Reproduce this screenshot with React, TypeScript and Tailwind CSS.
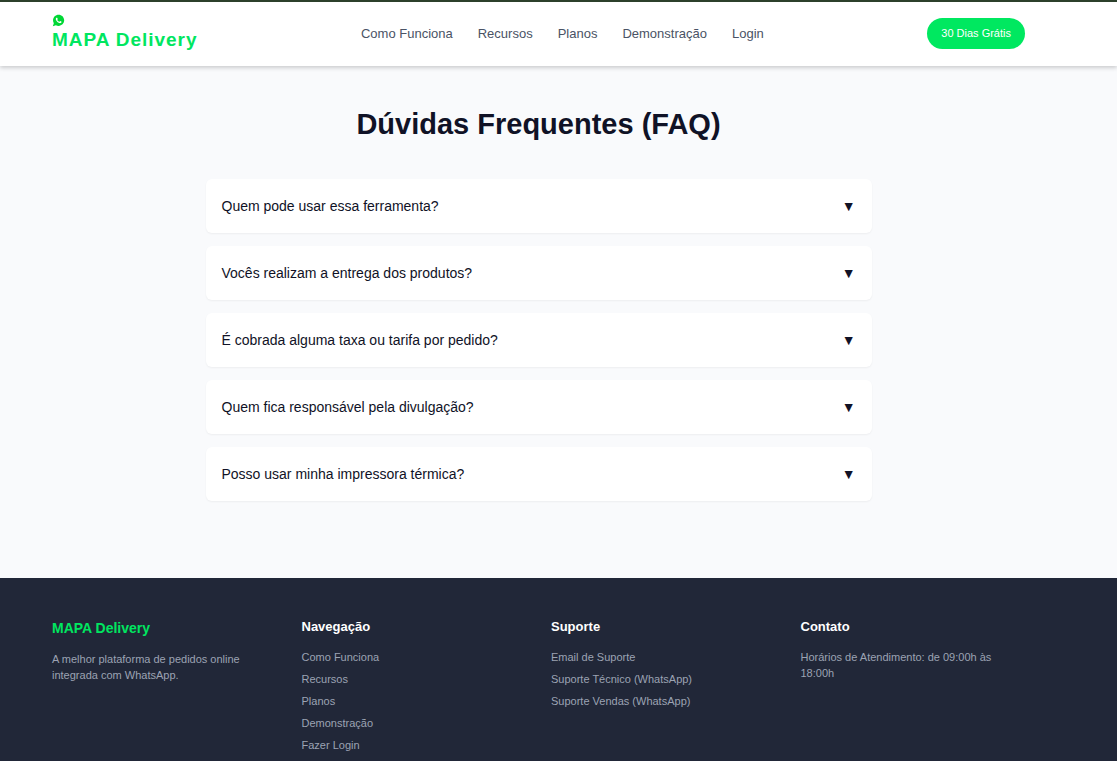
import { useState } from 'react';
import { IoLogoWhatsapp } from 'react-icons/io';

const navLinks = ['Como Funciona', 'Recursos', 'Planos', 'Demonstração', 'Login'];

const questions = [
  'Quem pode usar essa ferramenta?',
  'Vocês realizam a entrega dos produtos?',
  'É cobrada alguma taxa ou tarifa por pedido?',
  'Quem fica responsável pela divulgação?',
  'Posso usar minha impressora térmica?',
];

const footerColumns = [
  {
    title: 'Navegação',
    links: ['Como Funciona', 'Recursos', 'Planos', 'Demonstração', 'Fazer Login'],
  },
  {
    title: 'Suporte',
    links: ['Email de Suporte', 'Suporte Técnico (WhatsApp)', 'Suporte Vendas (WhatsApp)'],
  },
];

function Header() {
  return (
    <header className="relative z-10 flex items-center justify-between border-t-2 border-[#2c402b] bg-white pt-3 pr-[92px] pb-[13px] pl-[52px] shadow-[0_2px_4px_rgba(0,0,0,0.18)]">
      <a href="#" className="flex flex-col text-[#00e660]">
        <IoLogoWhatsapp className="size-[13px] text-[#00d735]" />
        <span className="text-[19px] leading-[26px] font-bold tracking-wider">MAPA Delivery</span>
      </a>
      <nav className="flex gap-[25px]">
        {navLinks.map((link) => (
          <a key={link} href="#" className="text-[13px] leading-5 text-[#4a5365]">
            {link}
          </a>
        ))}
      </nav>
      <a
        href="#"
        className="rounded-full bg-[#00e860] px-[14px] py-2 text-[11px] leading-[15px] text-white"
      >
        30 Dias Grátis
      </a>
    </header>
  );
}

function FaqItem({ question }: { question: string }) {
  const [open, setOpen] = useState(false);

  return (
    <button
      type="button"
      aria-expanded={open}
      onClick={() => setOpen(!open)}
      className="flex w-full items-center justify-between rounded-md bg-white px-4 py-4 text-left text-[14px] leading-[22px] text-[#101226] shadow-[0_1px_2px_rgba(0,0,0,0.05)]"
    >
      <span>{question}</span>
      <span className={open ? 'rotate-180' : ''}>▼</span>
    </button>
  );
}

function Faq() {
  return (
    <section id="faq" className="pt-[42px] pr-10 pb-[77px]">
      <h2 className="mb-[39px] text-center text-[29px] leading-8 font-bold text-[#101226]">
        Dúvidas Frequentes (FAQ)
      </h2>
      <div className="mx-auto flex max-w-[666px] flex-col gap-[13px]">
        {questions.map((question) => (
          <FaqItem key={question} question={question} />
        ))}
      </div>
    </section>
  );
}

function Footer() {
  return (
    <footer className="grid grow grid-cols-4 gap-[25px] bg-[#212738] pt-[39px] pr-[92px] pl-[52px] text-[11px] leading-4 text-[#9ca3b3]">
      <div>
        <h3 className="mb-3 text-[14px] leading-[22px] font-bold text-[#00e660]">MAPA Delivery</h3>
        <p>A melhor plataforma de pedidos online integrada com WhatsApp.</p>
      </div>
      {footerColumns.map((column) => (
        <div key={column.title}>
          <h4 className="mb-3 text-[13px] leading-5 font-bold text-white">{column.title}</h4>
          <ul className="flex flex-col gap-[6px]">
            {column.links.map((link) => (
              <li key={link}>
                <a href="#">{link}</a>
              </li>
            ))}
          </ul>
        </div>
      ))}
      <div>
        <h4 className="mb-3 text-[13px] leading-5 font-bold text-white">Contato</h4>
        <p>Horários de Atendimento: de 09:00h às 18:00h</p>
      </div>
    </footer>
  );
}

export default function App() {
  return (
    <div className="flex min-h-screen flex-col bg-[#f9fafc] font-['Liberation_Sans',Arial,sans-serif]">
      <Header />
      <Faq />
      <Footer />
    </div>
  );
}
